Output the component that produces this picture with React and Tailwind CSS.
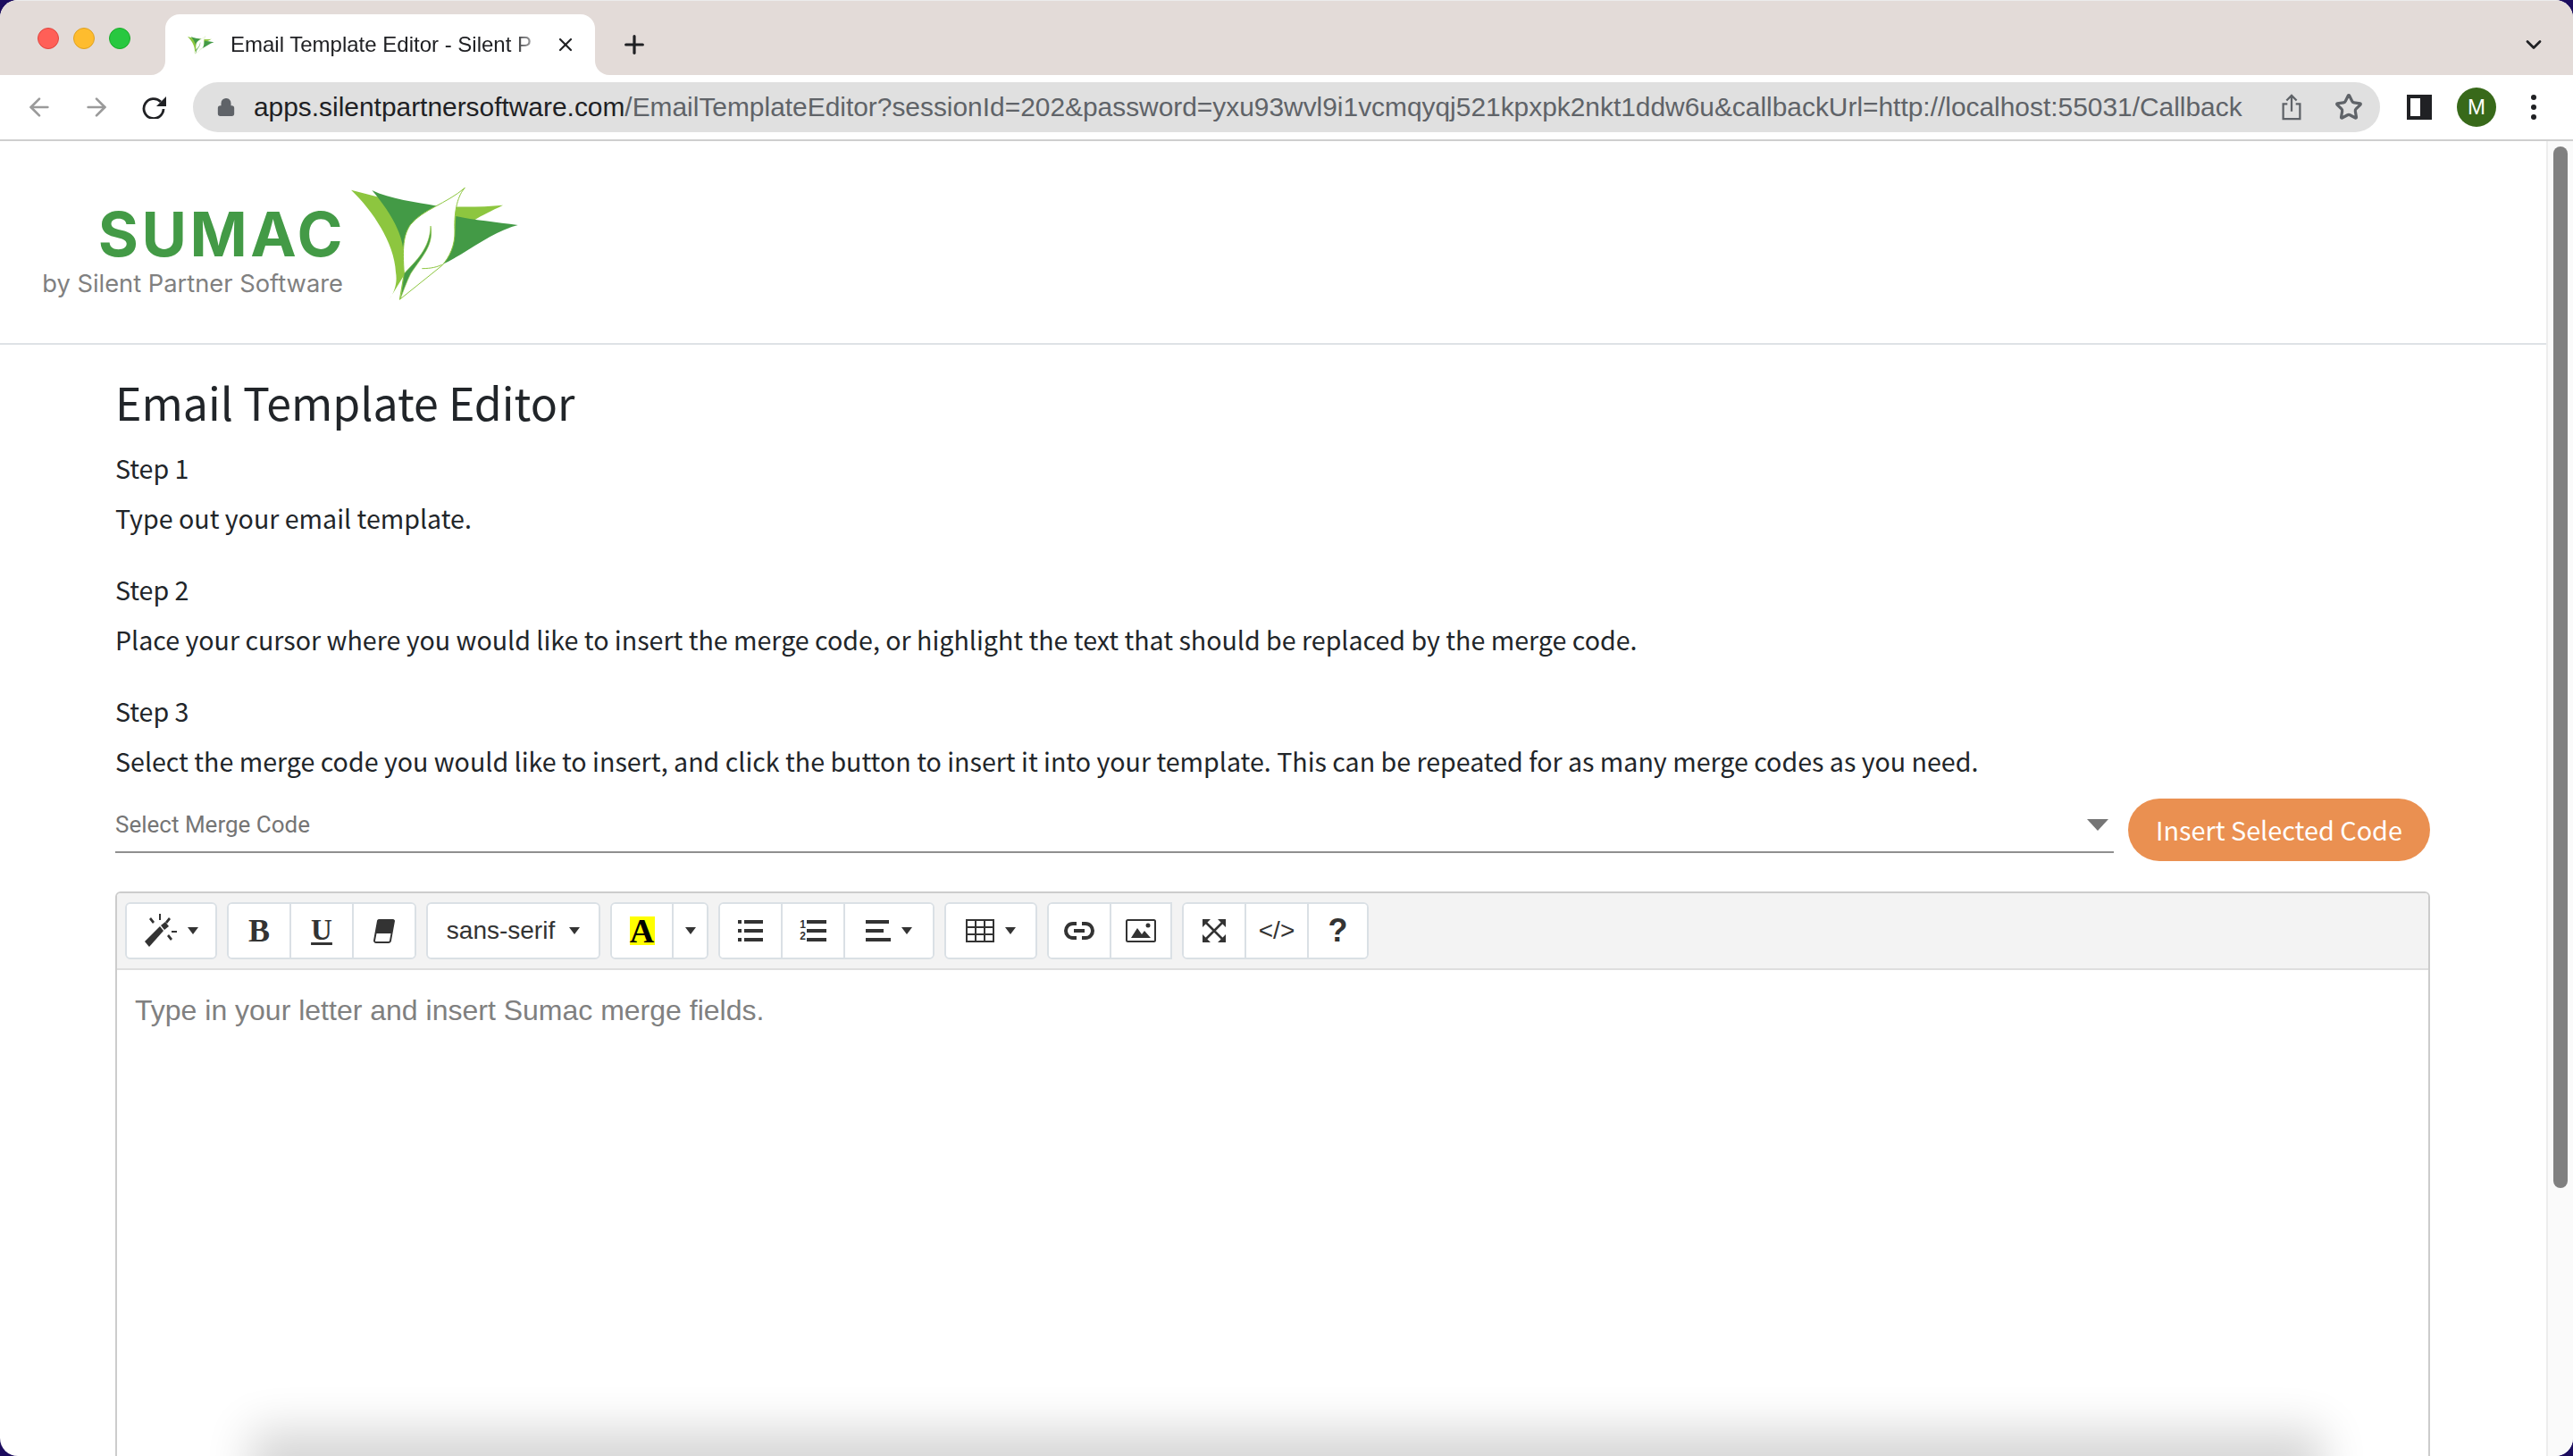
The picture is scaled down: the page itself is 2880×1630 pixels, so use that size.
import React from 'react';
import { ArrowLeft, ArrowRight, Lock, Star, Plus, X, ChevronDown } from 'lucide-react';

const Leaf = ({ className }) => (
    <svg viewBox="40 50 570 390" className={className}>
        <path d="M40 64C110 82 180 100 240 112L330 118C400 122 480 122 550 115C510 135 480 148 455 165L300 300L218 350L168 432C190 400 195 370 190 340C185 240 110 130 40 64Z" fill="#8dc63f" />
        <path d="M110 65C170 95 260 105 330 118C270 150 225 190 215 262C205 190 160 125 110 65Z" fill="#439a46" />
        <path d="M392 152C450 165 530 172 600 182C510 205 430 275 345 315C385 270 388 220 392 152Z" fill="#439a46" />
        <path d="M422 57C400 80 385 130 388 200C390 250 370 290 345 318L203 432L218 345C212 260 215 215 240 180C280 130 360 110 422 57Z" fill="#fff" stroke="#8dc63f" strokeWidth="3" />
        <path d="M307 185C318 250 280 285 240 345C225 375 215 405 206 428L218 345C260 300 305 260 307 185Z" fill="#439a46" stroke="#8dc63f" strokeWidth="2" />
        <path d="M278 328C310 328 330 322 345 315" fill="none" stroke="#8dc63f" strokeWidth="3" />
    </svg>
);

const Caret = () => (
    <svg viewBox="0 0 12 8" className="w-[12px] h-[8px]"><path d="M0 0H12L6 8Z" fill="#333" /></svg>
);

const Wand = () => (
    <svg viewBox="0 0 36 38" className="w-[36px] h-[38px]" fill="#333">
        <path d="M0 31L17 14L21 19L5 37Z" />
        <path d="M18 13L23 9L27 14L22 18Z" />
        <path d="M16 0H18V7H16ZM5 6L7 4L11 9L9 11ZM27 4L29 6L25 11L23 9ZM30 19H36V21H30ZM25 25L27 23L31 28L29 30Z" />
    </svg>
);

const Eraser = () => (
    <svg viewBox="0 0 24 28" className="w-[24px] h-[28px]">
        <path d="M6 1H22C23 1 24 2 24 3L20 25C20 27 18 28 17 28H3C1 28 0 26 0 25L4 3C4 2 5 1 6 1ZM3.5 17L2 25C2 26 2.500 26 3 26H16.500C17.500 26 18 25.500 18 25L19.500 17Z" fill="#333" />
    </svg>
);

const Bullets = () => (
    <svg viewBox="0 0 28 24" className="w-[28px] h-[24px]" fill="#333">
        <path d="M0 0H4V4H0ZM7 0H28V4H7ZM0 10H4V14H0ZM7 10H28V14H7ZM0 20H4V24H0ZM7 20H28V24H7Z" />
    </svg>
);

const Numbers = () => (
    <div className="flex items-center gap-[1px]">
        <div className="flex flex-col text-[12px] leading-[13px] font-bold text-[#333] font-['Liberation_Sans',sans-serif]">
            <span>1</span>
            <span>2</span>
        </div>
        <svg viewBox="0 0 22 24" className="w-[22px] h-[24px]" fill="#333">
            <path d="M0 0H22V4H0ZM0 10H22V14H0ZM0 20H22V24H0Z" />
        </svg>
    </div>
);

const AlignLeft = () => (
    <svg viewBox="0 0 28 24" className="w-[28px] h-[24px]" fill="#333">
        <path d="M0 0H26V4H0ZM0 10H20V14H0ZM0 20H28V24H0Z" />
    </svg>
);

const TableIcon = () => (
    <svg viewBox="0 0 32 26" className="w-[32px] h-[26px]" fill="none" stroke="#333" strokeWidth="2">
        <path d="M1 1H31V25H1ZM1 9H31M1 17H31M11 1V25M21 1V25" />
    </svg>
);

const LinkIcon = () => (
    <svg viewBox="0 0 34 20" className="w-[34px] h-[20px]" fill="none" stroke="#333" strokeWidth="4">
        <path d="M14 2H10C5 2 2 6 2 10C2 14 5 18 10 18H14M20 2H24C29 2 32 6 32 10C32 14 29 18 24 18H20M11 10H23" />
    </svg>
);

const Picture = () => (
    <svg viewBox="0 0 34 26" className="w-[34px] h-[26px]">
        <rect x="1" y="1" width="32" height="24" rx="1.500" fill="#fff" stroke="#333" strokeWidth="2" />
        <path d="M6 21L13 10L18 17L21 13L28 21Z" fill="#333" />
        <circle cx="25" cy="7" r="2.500" fill="#333" />
    </svg>
);

const Fullscreen = () => (
    <svg viewBox="0 0 26 26" className="w-[26px] h-[26px]">
        <path d="M0 0H9L0 9ZM26 0V9L17 0ZM0 26V17L9 26ZM26 26H17L26 17Z" fill="#333" />
        <path d="M4 4L22 22M22 4L4 22" fill="none" stroke="#333" strokeWidth="2.500" />
    </svg>
);

const Reload = () => (
    <svg viewBox="0 0 28 26" className="ml-[3px] w-[28px] h-[26px]">
        <path d="M21 7A11 11 0 1 0 24 15" fill="none" stroke="#202124" strokeWidth="2.800" />
        <path d="M27 1V12H16Z" fill="#202124" />
    </svg>
);

const SerifGlyph = ({ children, className }) => (
    <span className={`font-['Liberation_Serif',serif] font-bold text-[#333] ${className}`}>{children}</span>
);

const ToolBtn = ({ w, children, last }) => (
    <div className={`flex items-center justify-center gap-[12px] h-full bg-white ${w} ${last ? '' : 'border-r-2 border-[#dae0e5]'}`}>
        {children}
    </div>
);

const ToolGroup = ({ children, square }) => (
    <div className={`flex h-[64px] border-2 border-[#dae0e5] bg-white overflow-hidden ${square ? 'rounded-l-[6px]' : 'rounded-[6px]'}`}>
        {children}
    </div>
);

const BrowserChrome = () => (
    <div className="shrink-0">
        <div className="flex h-[84px] bg-[#e3dbd8] border-t border-[#ececec]">
            <div className="flex items-center gap-[16px] pl-[42px] pr-[39px] h-[84px]">
                <span className="w-[24px] h-[24px] rounded-full bg-[#ff5f57] border border-[#e0443e]" />
                <span className="w-[24px] h-[24px] rounded-full bg-[#febc2e] border border-[#dea123]" />
                <span className="w-[24px] h-[24px] rounded-full bg-[#28c840] border border-[#1aab29]" />
            </div>
            <div className="relative mt-[15px] w-[481px] bg-white rounded-t-[16px] flex items-center pl-[25px] pr-[17px]">
                <Leaf className="w-[30px] h-[21px] shrink-0" />
                <span className="ml-[18px] w-[352px] whitespace-nowrap text-[24px] text-[#202124] font-['Liberation_Sans',sans-serif] [mask-image:linear-gradient(to_right,black_90%,transparent)]">
                    Email Template Editor - Silent P
                </span>
                <X className="ml-[11px] w-[24px] h-[24px] text-[#202124] shrink-0" strokeWidth={2.2} />
                <span className="absolute bottom-0 left-[-16px] w-[16px] h-[16px] bg-white">
                    <span className="block w-full h-full bg-[#e3dbd8] rounded-br-[16px]" />
                </span>
                <span className="absolute bottom-0 right-[-16px] w-[16px] h-[16px] bg-white">
                    <span className="block w-full h-full bg-[#e3dbd8] rounded-bl-[16px]" />
                </span>
            </div>
            <div className="flex items-center pl-[28px] pt-[14px]">
                <Plus className="w-[32px] h-[32px] text-[#202124]" strokeWidth={2.4} />
            </div>
            <div className="flex-1 flex items-center justify-end pr-[30px] pt-[14px]">
                <ChevronDown className="w-[28px] h-[28px] text-[#202124]" strokeWidth={2.4} />
            </div>
        </div>
        <div className="flex items-center h-[72px] bg-white">
            <div className="flex items-center w-[216px] pl-[28px] gap-[32px]">
                <ArrowLeft className="w-[32px] h-[32px] text-[#9a9a9a]" strokeWidth={2} />
                <ArrowRight className="w-[32px] h-[32px] text-[#9a9a9a]" strokeWidth={2} />
                <Reload />
            </div>
            <div className="flex items-center w-[2448px] h-[56px] rounded-full bg-[#e0e0e0] pl-[26px]">
                <Lock className="w-[22px] h-[24px] text-[#5f6368] fill-[#5f6368]" />
                <span className="ml-[20px] w-[2277px] whitespace-nowrap text-[29.9px] font-['Liberation_Sans',sans-serif] text-[#5f6368]">
                    <span className="text-[#202124]">apps.silentpartnersoftware.com</span>/EmailTemplateEditor?sessionId=202&amp;password=yxu93wvl9i1vcmqyqj521kpxpk2nkt1ddw6u&amp;callbackUrl=http://localhost:55031/Callback
                </span>
                <svg viewBox="0 0 24 32" className="ml-[-8px] w-[24px] h-[30px]" fill="none" stroke="#5f6368" strokeWidth="2.400">
                    <path d="M7 12H2V30H22V12H17M12 21V2M6 8L12 2L18 8" />
                </svg>
                <Star className="ml-[36px] w-[32px] h-[32px] text-[#5f6368]" strokeWidth={2.4} />
            </div>
            <div className="flex items-center flex-1 pl-[30px]">
                <div className="w-[28px] h-[28px] border-[4px] border-[#202124] bg-white flex justify-end">
                    <span className="w-[9px] h-full bg-[#202124]" />
                </div>
                <div className="ml-[28px] w-[44px] h-[44px] rounded-full bg-[#38691a] flex items-center justify-center text-white text-[24px] font-['Liberation_Sans',sans-serif]">M</div>
                <div className="ml-[39px] flex flex-col gap-[5px]">
                    <span className="w-[6px] h-[6px] rounded-full bg-[#202124]" />
                    <span className="w-[6px] h-[6px] rounded-full bg-[#202124]" />
                    <span className="w-[6px] h-[6px] rounded-full bg-[#202124]" />
                </div>
            </div>
        </div>
        <div className="h-[2px] bg-[#cfcfcf]" />
    </div>
);

const Step = ({ title, text }) => (
    <div className="mb-[24px]">
        <p className="text-[28.6px] leading-[56px] text-[#212529]">{title}</p>
        <p className="text-[28.6px] leading-[56px] text-[#212529]">{text}</p>
    </div>
);

const EditorToolbar = () => (
    <div className="flex gap-[11px] h-[86px] pl-[9px] pt-[10px] bg-[#f3f3f3] border-b-2 border-[#dedede]">
        <ToolGroup>
            <ToolBtn w="w-[99px]" last><Wand /><Caret /></ToolBtn>
        </ToolGroup>
        <ToolGroup>
            <ToolBtn w="w-[70px]"><SerifGlyph className="text-[36px]">B</SerifGlyph></ToolBtn>
            <ToolBtn w="w-[70px]"><SerifGlyph className="text-[33px] underline underline-offset-[3px]">U</SerifGlyph></ToolBtn>
            <ToolBtn w="w-[68px]" last><Eraser /></ToolBtn>
        </ToolGroup>
        <ToolGroup>
            <ToolBtn w="w-[191px]" last>
                <span className="mr-[4px] text-[28px] text-[#333] font-['Liberation_Sans',sans-serif]">sans-serif</span>
                <Caret />
            </ToolBtn>
        </ToolGroup>
        <ToolGroup>
            <ToolBtn w="w-[69px]">
                <span className="flex items-center justify-center w-[28px] h-[32px] bg-[#ffff00] font-['Liberation_Serif',serif] font-bold text-[38px] leading-[32px] text-black">A</span>
            </ToolBtn>
            <ToolBtn w="w-[37px]" last><Caret /></ToolBtn>
        </ToolGroup>
        <ToolGroup>
            <ToolBtn w="w-[70px]"><Bullets /></ToolBtn>
            <ToolBtn w="w-[70px]"><Numbers /></ToolBtn>
            <ToolBtn w="w-[98px]" last><AlignLeft /><Caret /></ToolBtn>
        </ToolGroup>
        <ToolGroup>
            <ToolBtn w="w-[100px]" last><TableIcon /><Caret /></ToolBtn>
        </ToolGroup>
        <ToolGroup square>
            <ToolBtn w="w-[70px]"><LinkIcon /></ToolBtn>
            <ToolBtn w="w-[66px]" last><Picture /></ToolBtn>
        </ToolGroup>
        <ToolGroup>
            <ToolBtn w="w-[70px]"><Fullscreen /></ToolBtn>
            <ToolBtn w="w-[70px]"><span className="text-[28px] text-[#333] font-['Liberation_Sans',sans-serif]">&lt;/&gt;</span></ToolBtn>
            <ToolBtn w="w-[65px]" last><span className="text-[36px] font-bold text-[#333] font-['Liberation_Sans',sans-serif]">?</span></ToolBtn>
        </ToolGroup>
    </div>
);

const App = () => (
    <div className="relative h-[1630px] w-[2880px] overflow-hidden bg-[#1c0c5e]">
        <div className="flex flex-col h-full bg-white rounded-[20px] overflow-hidden">
            <BrowserChrome />
            <div className="flex flex-1 min-h-0">
                <div className="flex-1 min-w-0 overflow-hidden">
                    <div className="flex items-start h-[228px] border-b-2 border-[#dee2e6] pl-[47px]">
                        <div className="w-[337px] pt-[69px] text-right">
                            <p className="text-[69px] leading-[70px] font-bold text-[#439a46] font-['Inter',sans-serif] tracking-[3.5px] mr-[-3px]">SUMAC</p>
                            <p className="text-[27.3px] leading-[41px] text-[#808080] font-['Inter',sans-serif] whitespace-nowrap">by Silent Partner Software</p>
                        </div>
                        <Leaf className="mt-[50px] ml-[9px] w-[190px] h-[130px] shrink-0" />
                    </div>
                    <div className="pl-[129px] pr-[130px] pt-[33px] font-['Noto_Sans_CJK_JP',sans-serif]">
                        <h1 className="text-[50px] leading-[60px] text-[#212529] mb-[17px]">Email Template Editor</h1>
                        <Step title="Step 1" text="Type out your email template." />
                        <Step title="Step 2" text="Place your cursor where you would like to insert the merge code, or highlight the text that should be replaced by the merge code." />
                        <Step title="Step 3" text="Select the merge code you would like to insert, and click the button to insert it into your template. This can be repeated for as many merge codes as you need." />
                        <div className="flex gap-[16px] mt-[-10px] mb-[34px]">
                            <div className="flex-1 h-[61px] flex items-center justify-between border-b-2 border-[#8f8f8f] pr-[6px]">
                                <span className="text-[26px] text-[#757575] font-['Roboto',sans-serif]">Select Merge Code</span>
                                <svg viewBox="0 0 24 13" className="w-[24px] h-[13px]"><path d="M0 0H24L12 13Z" fill="#757575" /></svg>
                            </div>
                            <button className="w-[338px] h-[70px] rounded-full bg-[#ea9051] text-white text-[28.8px]">Insert Selected Code</button>
                        </div>
                        <div className="h-[800px] border-2 border-[#cccccc] rounded-t-[6px] overflow-hidden bg-white">
                            <EditorToolbar />
                            <p className="pl-[20px] pt-[23px] text-[32px] leading-[44px] text-[#808080] font-['Liberation_Sans',sans-serif]">Type in your letter and insert Sumac merge fields.</p>
                        </div>
                    </div>
                </div>
                <div className="w-[30px] shrink-0 bg-[#fafafa] border-l-2 border-[#ededed] pl-[6px] pr-[6px] pt-[6px]">
                    <div className="w-[16px] h-[1166px] rounded-full bg-[#808080]" />
                </div>
            </div>
        </div>
        <div className="absolute left-[310px] right-[310px] bottom-[-40px] h-[40px] shadow-[0_0_50px_30px_rgba(0,0,0,0.16)] bg-black/20" />
    </div>
);

export default App;
